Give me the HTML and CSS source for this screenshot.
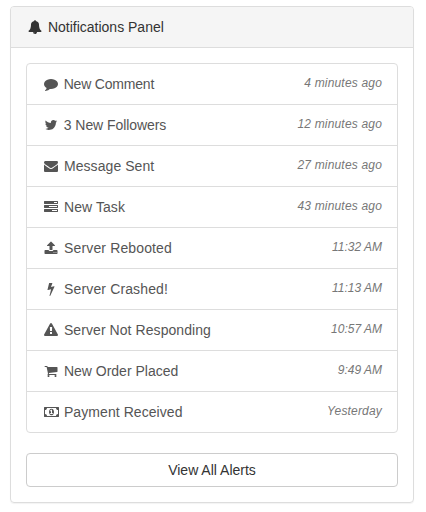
FILE: index.html
```html
<!DOCTYPE html>
<html lang="en">
<head>
<meta charset="utf-8">
<title>Notifications Panel</title>
<link rel="stylesheet" href="styles.css">
</head>
<body>
<section class="panel">
  <header class="panel-heading"><svg class="icon" viewBox="0 0 1792 1792"><path d="M912 1696q0-16-16-16-59 0-101.500-42.500t-42.500-101.500q0-16-16-16t-16 16q0 73 51.500 124.500t124.500 51.500q16 0 16-16zm816-288q0 52-38 90t-90 38h-448q0 106-75 181t-181 75-181-75-75-181h-448q-52 0-90-38t-38-90q50-42 91-88t85-119.500 74.500-158.500 50-206 19.500-260q0-152 117-282.500t307-158.500q-8-19-8-39 0-40 28-68t68-28 68 28 28 68q0 20-8 39 190 28 307 158.500t117 282.500q0 139 19.500 260t50 206 74.500 158.500 85 119.500 91 88z"/></svg> Notifications Panel</header>
  <div class="panel-body">
    <div class="list-group">
      <a class="list-item"><span class="label-tight"><svg class="icon" viewBox="0 0 1792 1792"><path d="M1792 896q0 174-120 321.500t-326 233-450 85.500q-70 0-145-8-198 175-460 242-49 14-114 22-17 2-30.500-9t-17.500-29v-1q-3-4-.5-12t2-10 4.500-9.500l6-9 7-8.500 8-9q7-8 31-34.500t34.500-38 31-39.500 32.500-51 27-59 26-76q-157-89-247.500-220t-90.500-281q0-174 120-321.500t326-233 450-85.500 450 85.500 326 233 120 321.500z"/></svg> New Comment</span><em class="time">4 minutes ago</em></a>
      <a class="list-item"><span class="label-snug"><svg class="icon" viewBox="0 0 1792 1792"><path d="M1684 408q-67 98-162 167 1 14 1 42 0 130-38 259.500t-115.500 248.500-184.500 210.500-258 146-323 54.500q-271 0-496-145 35 4 78 4 225 0 401-138-105-2-188-64.500t-114-159.500q33 5 61 5 43 0 85-11-112-23-185.500-111.500t-73.500-205.500v-4q68 38 146 41-66-44-105-115t-39-154q0-88 44-163 121 149 294.500 238.500t371.500 99.500q-8-38-8-74 0-134 94.500-228.500t228.500-94.500q140 0 236 102 109-21 205-78-37 115-142 178 93-10 186-50z"/></svg> 3 New Followers</span><em class="time">12 minutes ago</em></a>
      <a class="list-item"><span class="label-loose"><svg class="icon" viewBox="0 0 1792 1792"><path d="M1792 710v794q0 66-47 113t-113 47h-1472q-66 0-113-47t-47-113v-794q44 49 101 87 362 246 497 345 57 42 92.500 65.500t94.500 48 110 24.500h2q51 0 110-24.500t94.500-48 92.500-65.500q170-123 498-345 57-39 100-87zm0-294q0 79-49 151t-122 123q-376 261-468 325-10 7-42.500 30.500t-54 38-52 32.500-57.500 27-50 9h-2q-23 0-50-9t-57.500-27-52-32.500-54-38-42.500-30.500q-91-64-262-182.500t-205-142.500q-62-42-117-115.500t-55-136.500q0-78 41.500-130t118.500-52h1472q65 0 112.500 47t47.500 113z"/></svg> Message Sent</span><em class="time">27 minutes ago</em></a>
      <a class="list-item"><span class="label-loose"><svg class="icon" viewBox="0 0 1792 1792"><path d="M1024 1408h640v-128h-640v128zm-384-512h1024v-128h-1024v128zm640-512h384v-128h-384v128zm512 832v256q0 26-19 45t-45 19h-1664q-26 0-45-19t-19-45v-256q0-26 19-45t45-19h1664q26 0 45 19t19 45zm0-512v256q0 26-19 45t-45 19h-1664q-26 0-45-19t-19-45v-256q0-26 19-45t45-19h1664q26 0 45 19t19 45zm0-512v256q0 26-19 45t-45 19h-1664q-26 0-45-19t-19-45v-256q0-26 19-45t45-19h1664q26 0 45 19t19 45z"/></svg> New Task</span><em class="time">43 minutes ago</em></a>
      <a class="list-item"><span class="label-wide"><svg class="icon" viewBox="0 0 1792 1792"><path d="M1344 1472q0-26-19-45t-45-19-45 19-19 45 19 45 45 19 45-19 19-45zm256 0q0-26-19-45t-45-19-45 19-19 45 19 45 45 19 45-19 19-45zm128-224v320q0 40-28 68t-68 28h-1472q-40 0-68-28t-28-68v-320q0-40 28-68t68-28h427q21 56 70.500 92t110.500 36h256q61 0 110.500-36t70.500-92h427q40 0 68 28t28 68zm-325-648q-17 40-59 40h-256v448q0 26-19 45t-45 19h-256q-26 0-45-19t-19-45v-448h-256q-42 0-59-40-17-39 14-69l448-448q18-19 45-19t45 19l448 448q31 30 14 69z"/></svg> Server Rebooted</span><em class="time time-clock">11:32 AM</em></a>
      <a class="list-item"><span class="label-wide"><svg class="icon" viewBox="0 0 1792 1792"><path d="M1333 566q18 20 7 44l-540 1157q-13 25-42 25-4 0-14-2-17-5-25.500-19t-4.500-30l197-808-406 101q-4 1-12 1-18 0-31-11-18-15-13-39l201-825q4-14 16-23t28-9h328q19 0 32 12.500t13 29.500q0 8-5 18l-171 463 396-98q8-2 12-2 19 0 34 15z"/></svg> Server Crashed!</span><em class="time time-clock">11:13 AM</em></a>
      <a class="list-item"><span class="label-loose"><svg class="icon" viewBox="0 0 1792 1792"><path d="M1024 1375v-190q0-14-9.500-23.500t-22.500-9.500h-192q-13 0-22.500 9.500t-9.500 23.500v190q0 14 9.500 23.500t22.500 9.500h192q13 0 22.500-9.500t9.500-23.500zm-2-374l18-459q0-12-10-19-13-11-24-11h-220q-11 0-24 11-10 7-10 21l17 457q0 10 10 16.500t24 6.500h185q14 0 23.500-6.500t10.500-16.500zm-14-934l768 1408q35 63-2 126-17 29-46.500 46t-63.500 17h-1536q-34 0-63.500-17t-46.500-46q-37-63-2-126l768-1408q17-31 47-49t65-18 65 18 47 49z"/></svg> Server Not Responding</span><em class="time time-clock">10:57 AM</em></a>
      <a class="list-item"><span><svg class="icon" viewBox="0 0 1792 1792"><path d="M704 1536q0 52-38 90t-90 38-90-38-38-90 38-90 90-38 90 38 38 90zm896 0q0 52-38 90t-90 38-90-38-38-90 38-90 90-38 90 38 38 90zm128-1088v512q0 24-16.500 42.500t-40.500 21.500l-1044 122q13 60 13 70 0 16-24 64h920q26 0 45 19t19 45-19 45-45 19h-1024q-26 0-45-19t-19-45q0-11 8-31.500t16-36 21.500-40 15.500-29.500l-177-823h-204q-26 0-45-19t-19-45 19-45 45-19h256q16 0 28.500 6.500t19.500 15.500 13 24.500 8 26 5.500 29.500 4.500 26h1201q26 0 45 19t19 45z"/></svg> New Order Placed</span><em class="time time-clock">9:49 AM</em></a>
      <a class="list-item"><span class="label-loose"><svg class="icon icon-wide" viewBox="0 0 1920 1792"><path d="M768 1152h384v-96h-128v-448h-114l-148 137 77 80q42-37 55-57h2v288h-128v96zm512-256q0 70-21 142t-59.500 134-101.500 101-138 39-138-39-101.500-101-59.500-134-21-142 21-142 59.500-134 101.500-101 138-39 138 39 101.500 101 59.500 134 21 142zm512 256v-512q-106 0-181-75t-75-181h-1152q0 106-75 181t-181 75v512q106 0 181 75t75 181h1152q0-106 75-181t181-75zm128-832v1152q0 26-19 45t-45 19h-1792q-26 0-45-19t-19-45v-1152q0-26 19-45t45-19h1792q26 0 45 19t19 45z"/></svg> Payment Received</span><em class="time">Yesterday</em></a>
    </div>
    <a class="button">View All Alerts</a>
  </div>
</section>
</body>
</html>
```
FILE: styles.css
```css
* {
  box-sizing: border-box;
}

body {
  margin: 0;
  padding: 6px 12px 9px 10px;
  background: #fff;
  color: #333;
  font: 14px/20px "Liberation Sans", Arial, sans-serif;
}

.panel {
  border: 1px solid #ddd;
  border-radius: 4px;
  box-shadow: 0 1px 1px rgba(0, 0, 0, 0.05);
}

.panel-heading {
  padding: 10px 15px;
  border-bottom: 1px solid #ddd;
  border-radius: 3px 3px 0 0;
  background: #f5f5f5;
}

.panel-body {
  padding: 15px;
}

.icon {
  width: 14px;
  height: 14px;
  margin: 0 2px;
  vertical-align: -2px;
  fill: currentColor;
  fill-rule: evenodd;
}

.icon-wide {
  width: 15px;
  margin-right: 1px;
}

.list-group {
  margin-bottom: 20px;
  border: 1px solid #ddd;
  border-radius: 4px;
}

.list-item {
  display: flex;
  justify-content: space-between;
  align-items: flex-start;
  padding: 10px 15px;
  color: #555;
}

.list-item + .list-item {
  border-top: 1px solid #ddd;
}

.label-tight {
  letter-spacing: -0.2px;
}

.label-snug {
  letter-spacing: -0.07px;
}

.label-loose {
  letter-spacing: 0.07px;
}

.label-wide {
  letter-spacing: 0.14px;
}

.time {
  color: #777;
  font-size: 12px;
  line-height: 19px;
  letter-spacing: 0.18px;
}

.time-clock {
  letter-spacing: 0;
}

.button {
  display: block;
  padding: 6px 12px;
  border: 1px solid #ccc;
  border-radius: 4px;
  text-align: center;
}
```
